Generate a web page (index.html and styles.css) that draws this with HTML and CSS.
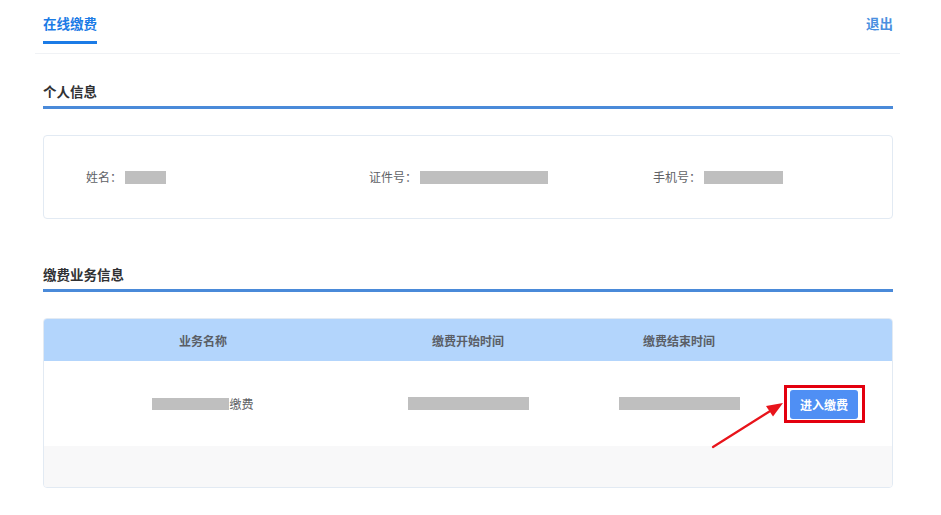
FILE: index.html
```html
<!DOCTYPE html>
<html lang="zh-CN">
<head>
<meta charset="utf-8">
<title>在线缴费</title>
<link rel="stylesheet" href="styles.css">
</head>
<body>
<div class="page">
  <header class="topbar">
    <div class="tab">在线缴费</div>
    <a class="logout">退出</a>
  </header>
  <main class="content">
    <h2 class="section-title first">个人信息</h2>
    <div class="info-card">
      <div class="info-item"><span>姓名：</span><span class="mask m-name"></span></div>
      <div class="info-item"><span>证件号：</span><span class="mask m-id"></span></div>
      <div class="info-item"><span>手机号：</span><span class="mask m-phone"></span></div>
    </div>

    <h2 class="section-title second">缴费业务信息</h2>
    <div class="table">
      <div class="thead">
        <div class="th">业务名称</div>
        <div class="th">缴费开始时间</div>
        <div class="th">缴费结束时间</div>
        <div class="th"></div>
      </div>
      <div class="trow">
        <div class="td"><span class="mask m-biz"></span><span>缴费</span></div>
        <div class="td"><span class="mask m-time"></span></div>
        <div class="td"><span class="mask m-time"></span></div>
        <div class="td td-op">
          <span class="highlight"><button class="btn">进入缴费</button></span>
        </div>
      </div>
      <div class="tfoot"></div>
      <svg class="arrow" width="85" height="60" viewBox="0 0 85 60">
        <line x1="8" y1="52" x2="66" y2="15.5" stroke="#e8141b" stroke-width="2.2" stroke-linecap="round"/>
        <polygon points="78,8 68,21.5 61,11" fill="#e8141b"/>
      </svg>
    </div>
  </main>
</div>
</body>
</html>
```

FILE: styles.css
```css
* { box-sizing: border-box; }

body {
  margin: 0;
  background: #ffffff;
  font-family: "Noto Sans CJK SC", "Noto Sans", sans-serif;
  color: #303133;
}

.page {
  margin-left: 35px;
  width: 865px;
}

.topbar {
  display: flex;
  justify-content: space-between;
  align-items: flex-start;
  height: 54px;
  padding: 0 7px 0 8px;
  border-bottom: 1px solid #f0f2f5;
}

.tab {
  padding-top: 14px;
  padding-bottom: 9px;
  line-height: 18px;
  font-size: 13.5px;
  font-weight: bold;
  color: #1b7be6;
  border-bottom: 3px solid #1b7be6;
}

.logout {
  padding-top: 14px;
  line-height: 18px;
  font-size: 13.5px;
  font-weight: bold;
  color: #4a8fe0;
  cursor: pointer;
}

.content {
  padding: 0 7px 0 8px;
}

.section-title {
  margin: 0;
  line-height: 20px;
  padding-bottom: 5px;
  font-size: 13.5px;
  font-weight: bold;
  color: #303133;
  border-bottom: 3px solid #4a8ad9;
}

.section-title.first { margin-top: 27px; }
.section-title.second { margin-top: 45px; }

.info-card {
  margin-top: 26px;
  height: 84px;
  border: 1px solid #e2eaf3;
  border-radius: 4px;
  display: grid;
  grid-template-columns: 283px 284px 1fr;
  align-items: center;
}

.info-item {
  display: flex;
  align-items: center;
  padding-left: 42px;
  font-size: 12px;
  color: #606266;
  line-height: 16px;
}

.mask {
  display: inline-block;
  background: #bfbfbf;
  height: 13px;
}

.info-item .mask { margin-left: 3px; }
.m-name { width: 41px; }
.m-id { width: 128px; }
.m-phone { width: 79px; }
.m-biz { width: 77px; height: 12px; }
.m-time { width: 121px; }

.table {
  position: relative;
  margin-top: 26px;
  border: 1px solid #e2eaf3;
  border-radius: 4px;
  overflow: hidden;
}

.thead,
.trow {
  display: grid;
  grid-template-columns: 318px 212px 210px 1fr;
  align-items: center;
}

.thead {
  height: 42px;
  background: #b3d5fc;
}

.th {
  text-align: center;
  font-size: 12px;
  font-weight: bold;
  color: #5a5e66;
}

.trow {
  height: 85px;
  background: #ffffff;
}

.td {
  display: flex;
  justify-content: center;
  align-items: center;
  font-size: 12px;
  color: #606266;
}

.td-op { justify-content: flex-start; }

.highlight {
  display: inline-flex;
  border: 3px solid #e3000f;
  padding: 2px 4px 1px 3px;
}

.btn {
  width: 68px;
  height: 29px;
  border: none;
  border-radius: 3px;
  background: #4f8ff4;
  color: #ffffff;
  font-family: "Noto Sans CJK SC", "Noto Sans", sans-serif;
  font-size: 12px;
  font-weight: bold;
  padding: 0;
}

.tfoot {
  height: 41px;
  background: #f8f8f9;
}

.arrow {
  position: absolute;
  left: 661px;
  top: 76px;
}
```
